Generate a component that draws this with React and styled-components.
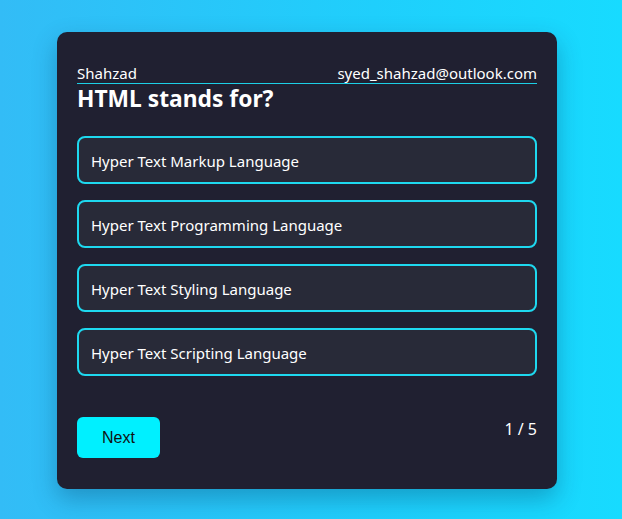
import React from "react";
import styled, { createGlobalStyle } from "styled-components";

const Global = createGlobalStyle`
  html, body { margin: 0; padding: 0; }
  body {
    font-family: "Noto Sans", "Open Sans", sans-serif;
    background: linear-gradient(90deg, #33bcf6 0%, #1fcffc 60%, #17dbff 100%);
    min-height: 519px;
  }
`;

const Page = styled.div`
  height: 519px;
  display: flex;
  align-items: center;
  justify-content: center;
  padding: 2px 8px 0 0;
  box-sizing: border-box;
`;

const Card = styled.div`
  width: 500px;
  box-sizing: border-box;
  background: #202031;
  border-radius: 10px;
  padding: 32px 20px 31px;
  box-shadow: 0 10px 25px rgba(0, 40, 80, 0.3);
  color: #fff;
`;

const Header = styled.div`
  display: flex;
  justify-content: space-between;
  align-items: flex-end;
  border-bottom: 1px solid #1ccfe6;
  font-size: 15px;
  line-height: 19px;
`;

const Title = styled.h2`
  margin: 0 0 22px;
  font-size: 22.8px;
  line-height: 30px;
  font-weight: 700;
`;

const Options = styled.div`
  display: flex;
  flex-direction: column;
  gap: 16px;
`;

const Option = styled.div`
  height: 48px;
  box-sizing: border-box;
  border: 2px solid #1ed8ef;
  border-radius: 8px;
  background: #282a38;
  display: flex;
  align-items: center;
  padding: 1px 12px 0;
  font-size: 15px;
`;

const Footer = styled.div`
  margin-top: 41px;
  display: flex;
  justify-content: space-between;
  align-items: flex-start;
`;

const NextButton = styled.button`
  width: 83px;
  height: 41px;
  border: none;
  border-radius: 6px;
  background: #00f0ff;
  color: #111;
  font-family: "Liberation Sans", Arial, sans-serif;
  font-size: 16px;
  cursor: pointer;
`;

const Counter = styled.span`
  font-size: 16px;
  line-height: 22px;
  margin-top: 1px;
`;

const options = [
  "Hyper Text Markup Language",
  "Hyper Text Programming Language",
  "Hyper Text Styling Language",
  "Hyper Text Scripting Language",
];

export default function App() {
  return (
    <>
      <Global />
      <Page>
        <Card>
          <Header>
            <span>Shahzad</span>
            <span>syed_shahzad@outlook.com</span>
          </Header>
          <Title>HTML stands for?</Title>
          <Options>
            {options.map((o) => (
              <Option key={o}>{o}</Option>
            ))}
          </Options>
          <Footer>
            <NextButton>Next</NextButton>
            <Counter>1 / 5</Counter>
          </Footer>
        </Card>
      </Page>
    </>
  );
}
